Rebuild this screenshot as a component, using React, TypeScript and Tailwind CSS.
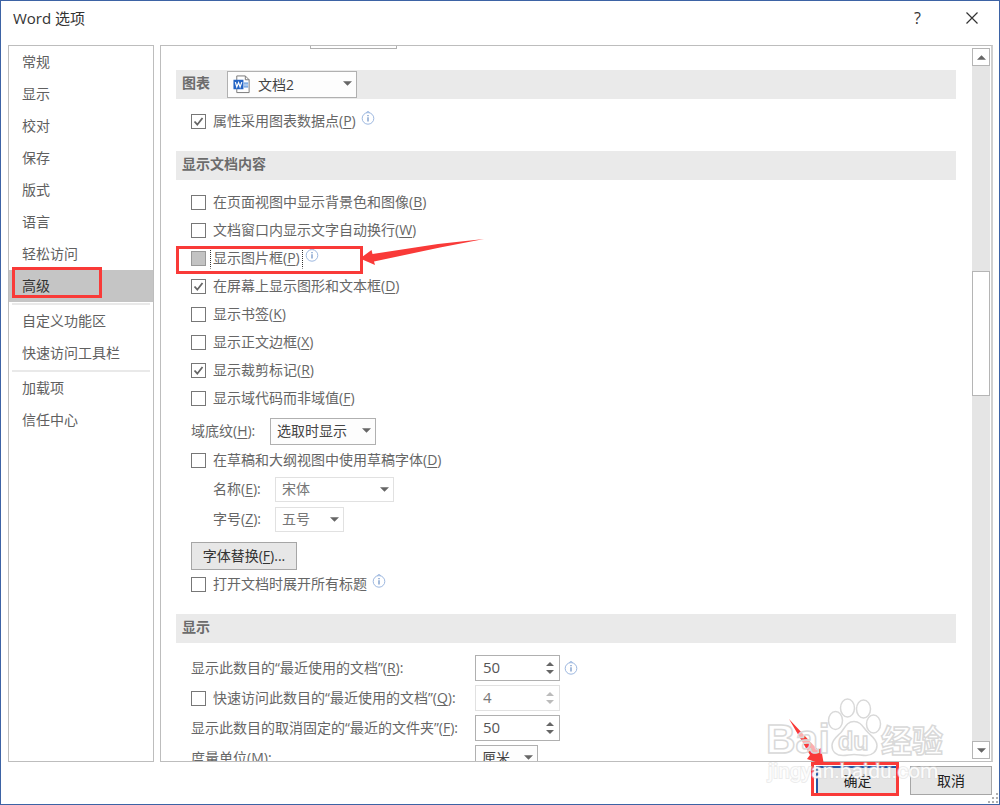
import { ReactNode, useState } from "react"
import clsx from "clsx"

const navGroups = [
	["常规", "显示", "校对", "保存", "版式", "语言", "轻松访问", "高级"],
	["自定义功能区", "快速访问工具栏"],
	["加载项", "信任中心"],
]

function Caret({ className, up }: { className?: string; up?: boolean }) {
	return (
		<svg viewBox="0 0 10 5" className={className} fill="currentColor" aria-hidden="true">
			<path d={up ? "M0 5h10L5 0z" : "M0 0h10L5 5z"} />
		</svg>
	)
}

function InfoIcon({ className }: { className?: string }) {
	return (
		<svg viewBox="0 0 14 14" className={clsx("size-3.5 shrink-0", className)} fill="none" aria-hidden="true">
			<path d="M5.2 1.6 7 .4l1.8 1.2" stroke="#9db8e0" />
			<circle cx="7" cy="7.4" r="5.8" stroke="#9db8e0" />
			<path d="M7 6.2v4.4" stroke="#5b83bd" strokeWidth="1.1" />
			<path d="M7 3.9v1.3" stroke="#5b83bd" strokeWidth="1.1" />
		</svg>
	)
}

function WordIcon({ className }: { className?: string }) {
	return (
		<svg viewBox="0 0 18 20" className={className} fill="none" aria-hidden="true">
			<path d="M3.5 1h9l4 4v13.5h-13z" fill="#fff" stroke="#777" />
			<path d="M12.5 1v4h4" stroke="#777" />
			<path d="M11 8.5h4.500M11 10.500h4.500M11 12.500h4.500" stroke="#5b95dd" strokeWidth="1.2" />
			<path d="M0 5h10.500v10H0z" fill="#2464c4" />
			<path d="M2 7.500 3.500 12.500 5.400 8 7 12.500 8.800 7.500" stroke="#fff" strokeWidth="1.300" />
		</svg>
	)
}

function Key({ children }: { children: string }) {
	return (
		<>
			(<u className="underline-offset-2">{children}</u>)
		</>
	)
}

function Band({ title, children }: { title: string; children?: ReactNode }) {
	return (
		<div className="flex h-[29px] items-center bg-[#eaeaea] pl-1.5">
			<h2 className="w-[45px] whitespace-nowrap pb-1 font-bold text-[#6c6c6c]">{title}</h2>
			{children}
		</div>
	)
}

interface CheckProps {
	id: string
	children: ReactNode
	checked?: boolean
	focused?: boolean
	info?: boolean
	className?: string
}

function Check({ id, children, checked = false, focused, info, className }: CheckProps) {
	const [value, setValue] = useState(checked)

	return (
		<div className={clsx("flex h-7 items-center whitespace-nowrap", className)}>
			<span className="relative grid size-[15px] shrink-0">
				<input
					id={id}
					type="checkbox"
					checked={value}
					onChange={(e) => setValue(e.target.checked)}
					className={clsx(
						"peer size-[15px] appearance-none border",
						focused ? "border-[#999] bg-[#c3c3c3]" : "border-[#777] bg-white"
					)}
				/>
				<svg
					viewBox="0 0 15 15"
					className="pointer-events-none absolute inset-0 hidden size-[15px] peer-checked:block"
					fill="none"
					aria-hidden="true"
				>
					<path d="m3.500 7.500 2.800 3.200 5.200-6.700" stroke="#666" strokeWidth="1.800" />
				</svg>
			</span>
			<label
				htmlFor={id}
				className={clsx(
					"ml-1 border px-0.5",
					focused ? "border-dotted border-[#333] border-b-transparent" : "border-transparent"
				)}
			>
				{children}
			</label>
			{info && <InfoIcon className="ml-0.5 mt-1 self-start" />}
		</div>
	)
}

interface DropProps {
	id: string
	value: string
	muted?: boolean
	icon?: boolean
	label?: string
	className: string
}

function Drop({ id, value, muted, icon, label, className }: DropProps) {
	return (
		<div className={clsx("relative shrink-0", className)}>
			<select
				id={id}
				aria-label={label}
				className={clsx(
					"size-full appearance-none border",
					icon ? "pl-[30px]" : "pl-1.5",
					muted ? "border-[#e1e1e1] bg-white text-[#777]" : "border-[#b0b0b0] bg-[#fdfdfd] text-[#444]"
				)}
			>
				<option>{value}</option>
			</select>
			{icon && <WordIcon className="pointer-events-none absolute left-1.5 top-1 h-[19px] w-[18px]" />}
			<Caret className="pointer-events-none absolute right-[5px] top-[10px] h-[5px] w-[9px] text-[#666]" />
		</div>
	)
}

function Spin({ id, initial, muted }: { id: string; initial: number; muted?: boolean }) {
	const [value, setValue] = useState(initial)

	return (
		<div
			className={clsx(
				"flex h-[26px] w-[85px] shrink-0 items-center border bg-white pl-[7px] pr-[5px]",
				muted ? "border-[#e1e1e1] text-[#777]" : "border-[#b0b0b0] text-[#555]"
			)}
		>
			<input
				id={id}
				type="text"
				inputMode="numeric"
				value={value}
				onChange={(e) => setValue(Number(e.target.value) || 0)}
				className="w-full min-w-0 text-[15px] outline-none"
			/>
			<div className={clsx("flex flex-col gap-1", muted ? "text-[#bbb]" : "text-[#666]")}>
				<button type="button" aria-label="+" onClick={() => setValue(value + 1)}>
					<Caret up className="h-1 w-2" />
				</button>
				<button type="button" aria-label="-" onClick={() => setValue(value - 1)}>
					<Caret className="h-1 w-2" />
				</button>
			</div>
		</div>
	)
}

function Sidebar() {
	const [active, setActive] = useState("高级")

	return (
		<nav className="w-[146px] shrink-0 border border-[#bdbdbd]">
			{navGroups.map((group, i) => (
				<div key={i}>
					{i > 0 && <div className="mx-[3px] h-[3px] border-t border-white bg-[#e9e9e9]" />}
					{group.map((name) => (
						<div key={name} className="relative">
							<button
								type="button"
								onClick={() => setActive(name)}
								className={clsx(
									"block h-8 w-full pl-[13px] text-left",
									name === active ? "bg-[#c5c5c5] text-[#333]" : "text-[#606060]"
								)}
							>
								{name}
							</button>
							{name === "高级" && (
								<div className="pointer-events-none absolute -top-[3px] left-[3px] h-[31px] w-[90px] border-[3px] border-[#f93a38]" />
							)}
						</div>
					))}
				</div>
			))}
		</nav>
	)
}

function Scrollbar() {
	return (
		<div className="mx-px my-0.5 flex w-[18px] shrink-0 flex-col bg-[#e5e5e5]">
			<button type="button" aria-label="▲" className="grid h-[18px] place-items-center border border-[#b5b5b5] bg-white text-[#666]">
				<Caret up className="h-[5px] w-[9px]" />
			</button>
			<div className="grow-[206]" />
			<div className="grow-[123] border border-[#b5b5b5] bg-white" />
			<div className="grow-[346]" />
			<button type="button" aria-label="▼" className="grid h-[18px] place-items-center border border-[#b5b5b5] bg-white text-[#666]">
				<Caret className="h-[5px] w-[9px]" />
			</button>
		</div>
	)
}

function Watermark() {
	return (
		<svg
			viewBox="760 695 190 95"
			className="pointer-events-none absolute bottom-3.5 right-[49px] h-[95px] w-[190px]"
			stroke="#d9d9d9"
			strokeWidth="1.5"
			fill="#fff"
			fillOpacity="0.6"
			aria-hidden="true"
		>
			<ellipse cx="835.5" cy="720.500" rx="7" ry="9" />
			<ellipse cx="847.500" cy="708" rx="7" ry="9" />
			<ellipse cx="863.500" cy="709" rx="7" ry="9" />
			<ellipse cx="873.500" cy="724" rx="7" ry="9" />
			<path d="M854 721.500c-7 0-9 6-13 11-4 4-9 7-9 13 0 7 5 10 11 10 4 0 7-1 11-1s8 1 12 1c6 0 11-4 11-10s-5-9-9-13c-5-5-7-11-14-11z" />
			<g fontFamily="'Liberation Sans', sans-serif" fontWeight="bold">
				<text x="766" y="753" fontSize="41">
					Bai
				</text>
				<text x="838" y="750" fontSize="25">
					du
				</text>
			</g>
			<text x="881" y="752" fontSize="31" fontWeight="bold" fontFamily="'Noto Sans CJK SC', sans-serif">
				经验
			</text>
			<text
				x="768"
				y="778"
				fontSize="21"
				fontFamily="Roboto, sans-serif"
				fillOpacity="0.9"
				strokeWidth="2"
				strokeOpacity="0.5"
				paintOrder="stroke"
			>
				jingyan.baidu.com
			</text>
		</svg>
	)
}

export default function App() {
	return (
		<div className="relative flex h-screen flex-col overflow-hidden border border-[#3d63a5] bg-white font-['Open_Sans','Noto_Sans_CJK_SC',sans-serif] text-sm text-[#666]">
			<header className="flex h-11 shrink-0 items-start pl-3 pr-[21px] pt-[5px] text-[#333]">
				<h1 className="text-[15px] leading-6">Word 选项</h1>
				<button type="button" className="ml-auto mr-[45px] text-base leading-6">
					?
				</button>
				<button type="button" aria-label="✕" className="grid h-6 place-items-center">
					<svg viewBox="0 0 12 12" className="size-3" stroke="#333" strokeWidth="1.200" aria-hidden="true">
						<path d="m.5.5 11 11M11.500.5l-11 11" />
					</svg>
				</button>
			</header>

			<main className="flex min-h-0 flex-1 gap-1.5 pl-[7px] pr-1.5">
				<Sidebar />

				<section className="flex min-w-0 flex-1 border border-r-2 border-[#bdbdbd] border-r-[#cfcfcf]">
					<div className="min-w-0 flex-1 overflow-hidden px-[15px]">
						<div className="h-6 pl-[134px]">
							<div className="h-[3px] w-[87px] border border-t-0 border-[#b0b0b0]" />
						</div>

						<Band title="图表">
							<Drop id="chart" value="文档2" label="图表" icon className="h-[27px] w-[130px]" />
						</Band>
						<div className="mb-4 mt-2 pl-[15px]">
							<Check id="points" checked info>
								属性采用图表数据点<Key>P</Key>
							</Check>
						</div>

						<Band title="显示文档内容" />
						<div className="mb-4 mt-2 pl-[15px]">
							<Check id="background">
								在页面视图中显示背景色和图像<Key>B</Key>
							</Check>
							<Check id="wrap">
								文档窗口内显示文字自动换行<Key>W</Key>
							</Check>
							<div className="relative">
								<Check id="placeholders" focused info>
									显示图片框<Key>P</Key>
								</Check>
								<div className="pointer-events-none absolute -left-[15px] top-0.5 h-7 w-[187px] border-[3px] border-[#f93a38]" />
								<svg
									viewBox="0 0 126 28"
									className="pointer-events-none absolute -top-1.5 left-[169px] h-7 w-[126px]"
									fill="#f93a38"
									aria-hidden="true"
								>
									<path d="M0 20.500 11.500 12 12.500 16 78 6 124 1 80 9.500 14 23.500 15 27z" />
								</svg>
							</div>
							<Check id="drawings" checked>
								在屏幕上显示图形和文本框<Key>D</Key>
							</Check>
							<Check id="bookmarks">
								显示书签<Key>K</Key>
							</Check>
							<Check id="boundaries">
								显示正文边框<Key>X</Key>
							</Check>
							<Check id="crop" checked>
								显示裁剪标记<Key>R</Key>
							</Check>
							<Check id="codes">
								显示域代码而非域值<Key>F</Key>
							</Check>
							<div className="mt-1 flex h-[30px] items-center">
								<label htmlFor="shading" className="w-[79px]">
									域底纹<Key>H</Key>:
								</label>
								<Drop id="shading" value="选取时显示" className="h-[27px] w-[106px]" />
							</div>
							<Check id="draft">
								在草稿和大纲视图中使用草稿字体<Key>D</Key>
							</Check>
							<div className="flex h-[30px] items-center pl-[22px]">
								<label htmlFor="font" className="w-[62px]">
									名称<Key>E</Key>:
								</label>
								<Drop id="font" value="宋体" muted className="h-[25px] w-[119px]" />
							</div>
							<div className="flex h-[30px] items-center pl-[22px]">
								<label htmlFor="size" className="w-[62px]">
									字号<Key>Z</Key>:
								</label>
								<Drop id="size" value="五号" muted className="h-[25px] w-[69px]" />
							</div>
							<button
								type="button"
								className="mt-2 block h-7 w-[106px] border border-[#a6a6a6] bg-[#e7e7e7] text-[#333]"
							>
								字体替换<Key>F</Key>...
							</button>
							<Check id="expand" info>
								打开文档时展开所有标题
							</Check>
						</div>

						<Band title="显示" />
						<div className="mt-2 pl-[15px] pt-0.5">
							<div className="flex h-[30px] items-center">
								<label htmlFor="recent" className="w-[284px]">
									显示此数目的“最近使用的文档”<Key>R</Key>:
								</label>
								<Spin id="recent" initial={50} />
								<InfoIcon className="ml-1" />
							</div>
							<div className="flex h-[30px] items-center">
								<Check id="quick" className="w-[284px]">
									快速访问此数目的“最近使用的文档”<Key>Q</Key>:
								</Check>
								<Spin id="quick-count" initial={4} muted />
							</div>
							<div className="flex h-[30px] items-center">
								<label htmlFor="folders" className="w-[284px]">
									显示此数目的取消固定的“最近的文件夹”<Key>F</Key>:
								</label>
								<Spin id="folders" initial={50} />
							</div>
							<div className="flex h-[30px] items-center">
								<label htmlFor="unit" className="w-[284px]">
									度量单位<Key>M</Key>:
								</label>
								<Drop id="unit" value="厘米" className="h-[26px] w-[63px]" />
							</div>
						</div>
					</div>
					<Scrollbar />
				</section>
			</main>

			<footer className="flex h-[42px] shrink-0 justify-end gap-[11px] pr-[7px] pt-1 text-[#222]">
				<div className="relative">
					<button type="button" className="h-[29px] w-[83px] border-2 border-[#2456a3] bg-[#e5e5e5]">
						确定
					</button>
					<div className="pointer-events-none absolute -left-[5px] -top-1 h-[34px] w-[88px] border-[3px] border-[#f93a38]" />
					<svg
						viewBox="0 0 36 47"
						className="pointer-events-none absolute -left-[27px] -top-[47px] h-[47px] w-9"
						fill="#f93a38"
						aria-hidden="true"
					>
						<path d="M0 0 29 31 32 29 35 46 18 40 21 36z" />
					</svg>
				</div>
				<button type="button" className="h-[29px] w-[82px] border border-[#a6a6a6] bg-[#e7e7e7]">
					取消
				</button>
			</footer>

			<Watermark />
			<svg viewBox="0 0 10 10" className="absolute bottom-px right-px size-2.5" fill="#b0b0b0" aria-hidden="true">
				<path d="M8 0h2v2H8zM4 4h2v2H4zM8 4h2v2H8zM0 8h2v2H0zM4 8h2v2H4zM8 8h2v2H8z" />
			</svg>
		</div>
	)
}
